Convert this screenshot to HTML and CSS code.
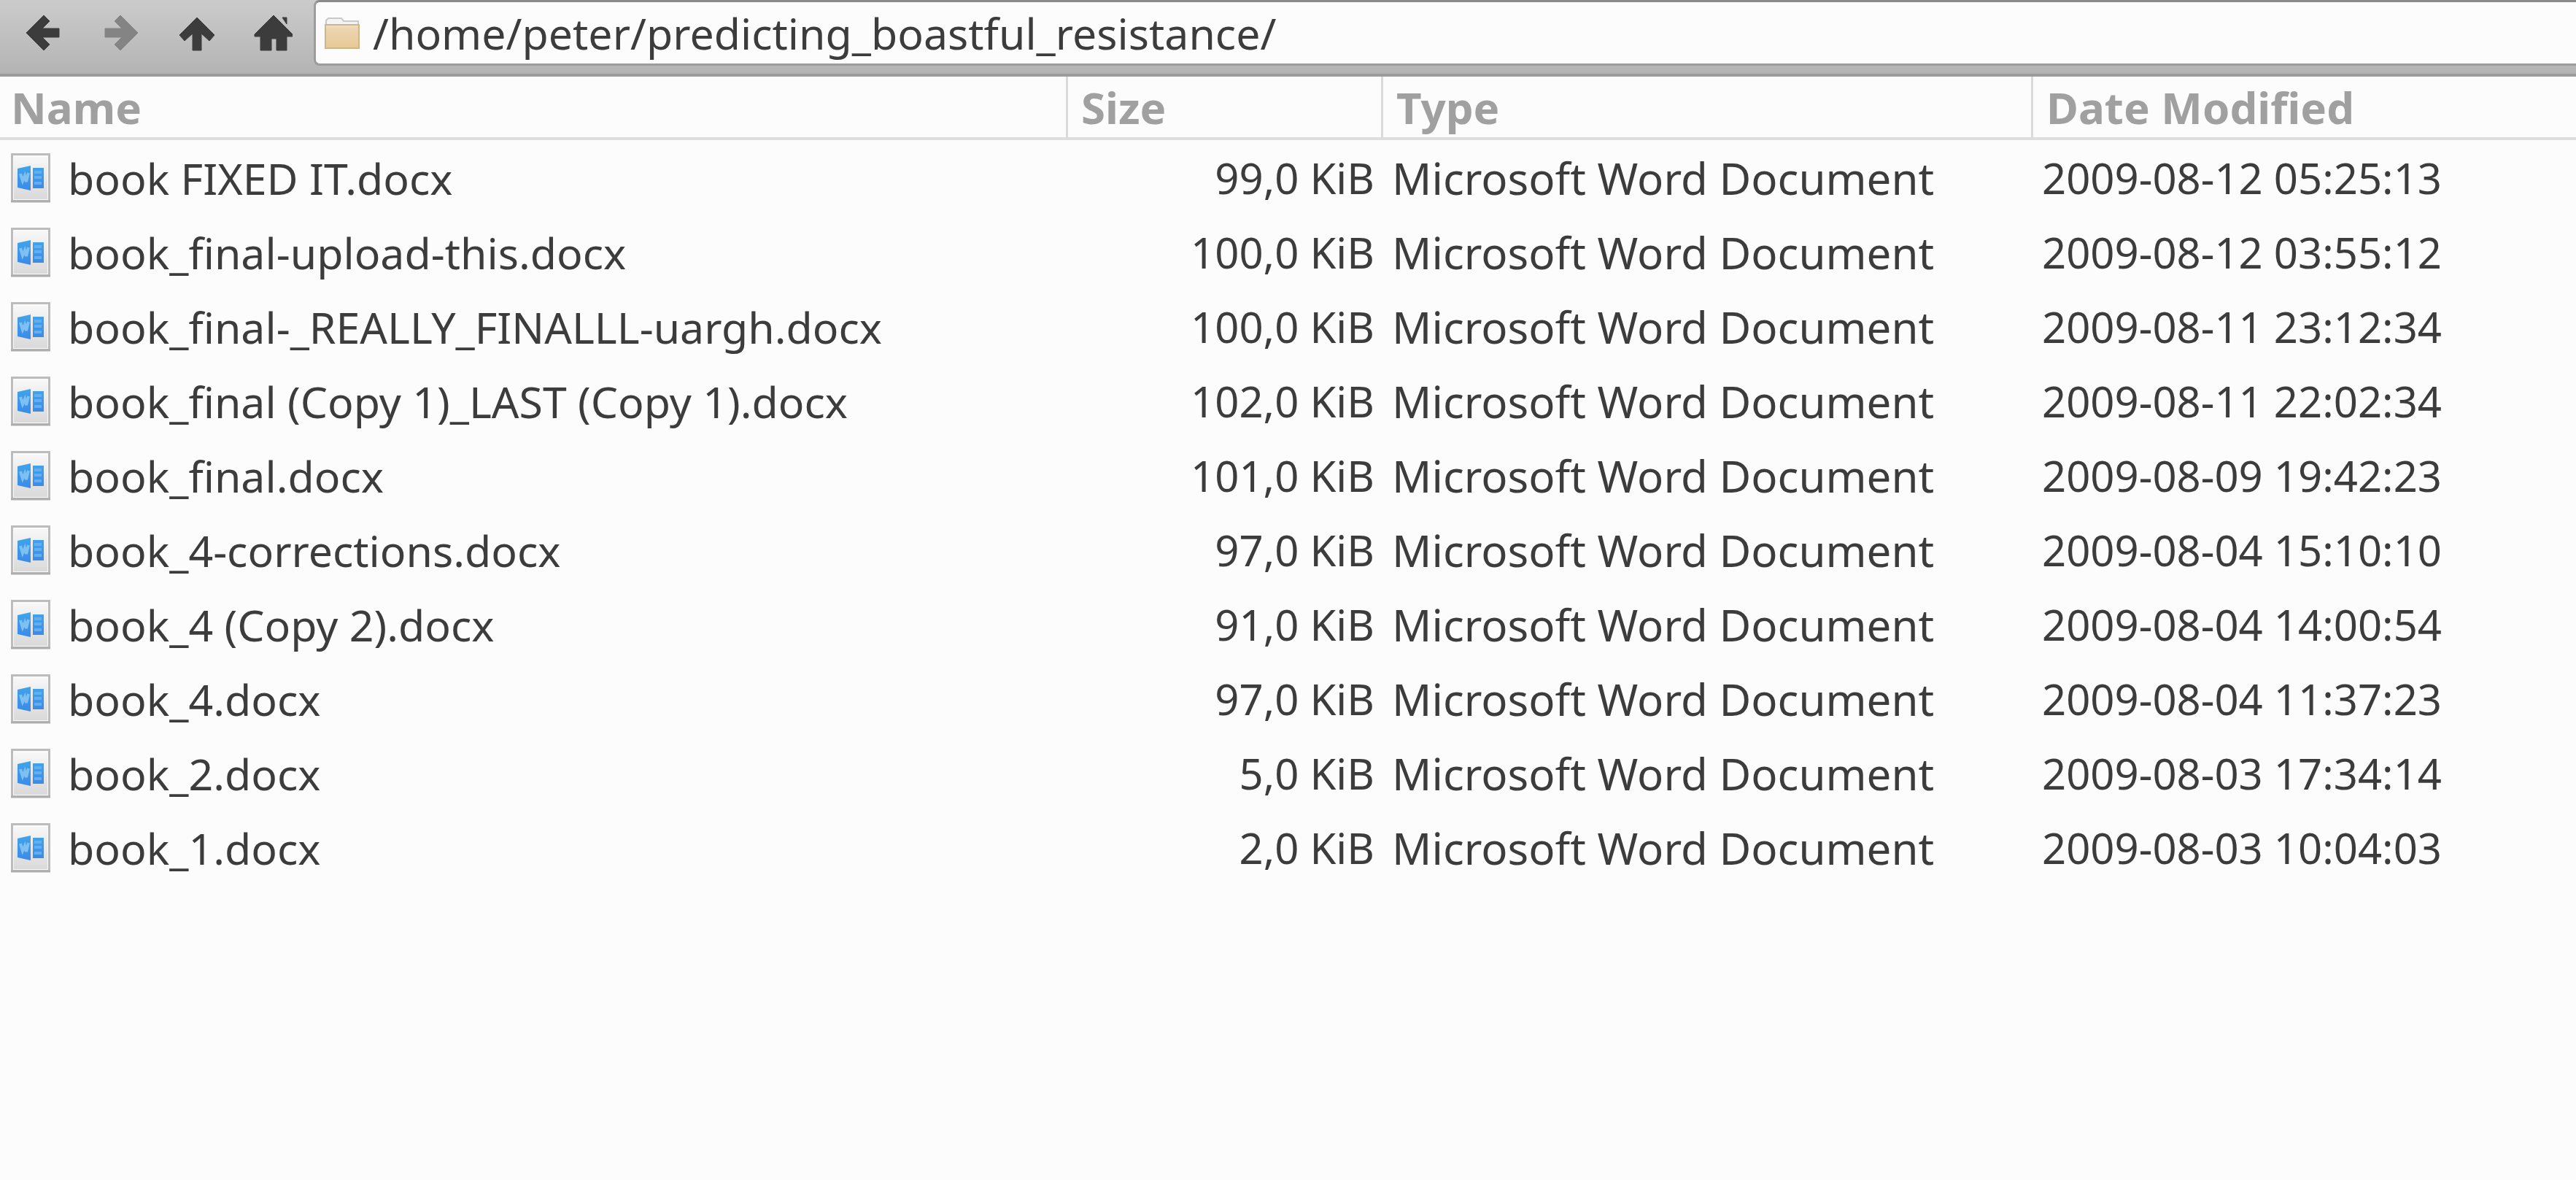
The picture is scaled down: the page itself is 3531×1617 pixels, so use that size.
FILE: index.html
```html
<!DOCTYPE html>
<html lang="en">
<head>
<meta charset="utf-8">
<title>predicting_boastful_resistance - File Manager</title>
<link rel="stylesheet" href="styles.css">
</head>
<body>
<svg class="defs" aria-hidden="true">
  <defs>
    <linearGradient id="paper" x1="0" y1="0" x2="0" y2="1">
      <stop offset="0" stop-color="#f7f7f7"/>
      <stop offset="1" stop-color="#d9d9d9"/>
    </linearGradient>
    <linearGradient id="blue" x1="0" y1="0" x2="0" y2="1">
      <stop offset="0" stop-color="#40a4ea"/>
      <stop offset="1" stop-color="#3b8ae8"/>
    </linearGradient>
    <linearGradient id="tan" x1="0" y1="0" x2="0" y2="1">
      <stop offset="0" stop-color="#f2dfc2"/>
      <stop offset="0.2" stop-color="#ecd4ae"/>
      <stop offset="1" stop-color="#e7c996"/>
    </linearGradient>
    <symbol id="docx" viewBox="0 0 54 68">
      <rect x="1.5" y="1.5" width="51" height="64" fill="#fafafa" stroke="#bcbcbc" stroke-width="3"/>
      <rect x="4" y="5" width="46" height="58" fill="url(#paper)"/>
      <path d="M0 66h54" stroke="#adadad" stroke-width="3"/>
      <path d="M9 21l18-4v34l-18-4z" fill="url(#blue)"/>
      <path d="M13 28l3 10 3-7 2 8 3-12" fill="none" stroke="#7fc0f2" stroke-width="4"/>
      <rect x="30" y="20" width="15" height="28" fill="url(#blue)"/>
      <path d="M32 26h10M32 33h10M32 41h10" stroke="#62aeee" stroke-width="4"/>
    </symbol>
  </defs>
</svg>
<header class="toolbar">
  <nav class="nav">
    <button class="nav-button" type="button" aria-label="Back">
      <svg viewBox="0 0 54 54"><path d="M4 27L28 3l8 8-10 10h23v12H26l10 10-8 8z"/></svg>
    </button>
    <button class="nav-button" type="button" aria-label="Forward" disabled>
      <svg viewBox="0 0 54 54"><path d="M52 27L28 3l-8 8 10 10H7v12h23L20 43l8 8z"/></svg>
    </button>
    <button class="nav-button" type="button" aria-label="Up">
      <svg viewBox="0 0 54 54"><path d="M28 6L4 30l7 8 11-10v23h12V28l11 10 7-8z"/></svg>
    </button>
    <button class="nav-button" type="button" aria-label="Home">
      <svg viewBox="0 0 54 54"><path d="M28 3L2 29v3h8v19h15V35h7v16h14V32h8v-3zM40 6h6v9z"/></svg>
    </button>
  </nav>
  <label class="location">
    <svg class="folder" viewBox="0 0 48 44" aria-hidden="true">
      <path d="M2 12V5l3-3h18l3 4h20v6" fill="#f4f4f4" stroke="#c9c9c9" stroke-width="2"/>
      <rect x="1" y="11" width="46" height="32" fill="url(#tan)" stroke="#cdb58c" stroke-width="2"/>
    </svg>
    <input class="path" type="text" aria-label="Location" value="/home/peter/predicting_boastful_resistance/" spellcheck="false">
  </label>
</header>
<main>
<table class="files">
  <colgroup><col class="col-name"><col class="col-size"><col class="col-type"><col></colgroup>
  <thead>
    <tr><th scope="col">Name</th><th scope="col">Size</th><th scope="col">Type</th><th scope="col">Date Modified</th></tr>
  </thead>
  <tbody>
    <tr><td><span class="file"><svg class="doc" aria-hidden="true"><use href="#docx"/></svg>book FIXED IT.docx</span></td><td class="size">99,0 KiB</td><td class="type">Microsoft Word Document</td><td>2009-08-12 05:25:13</td></tr>
    <tr><td><span class="file"><svg class="doc" aria-hidden="true"><use href="#docx"/></svg>book_final-upload-this.docx</span></td><td class="size">100,0 KiB</td><td class="type">Microsoft Word Document</td><td>2009-08-12 03:55:12</td></tr>
    <tr><td><span class="file"><svg class="doc" aria-hidden="true"><use href="#docx"/></svg>book_final-_REALLY_FINALLL-uargh.docx</span></td><td class="size">100,0 KiB</td><td class="type">Microsoft Word Document</td><td>2009-08-11 23:12:34</td></tr>
    <tr><td><span class="file"><svg class="doc" aria-hidden="true"><use href="#docx"/></svg>book_final (Copy 1)_LAST (Copy 1).docx</span></td><td class="size">102,0 KiB</td><td class="type">Microsoft Word Document</td><td>2009-08-11 22:02:34</td></tr>
    <tr><td><span class="file"><svg class="doc" aria-hidden="true"><use href="#docx"/></svg>book_final.docx</span></td><td class="size">101,0 KiB</td><td class="type">Microsoft Word Document</td><td>2009-08-09 19:42:23</td></tr>
    <tr><td><span class="file"><svg class="doc" aria-hidden="true"><use href="#docx"/></svg>book_4-corrections.docx</span></td><td class="size">97,0 KiB</td><td class="type">Microsoft Word Document</td><td>2009-08-04 15:10:10</td></tr>
    <tr><td><span class="file"><svg class="doc" aria-hidden="true"><use href="#docx"/></svg>book_4 (Copy 2).docx</span></td><td class="size">91,0 KiB</td><td class="type">Microsoft Word Document</td><td>2009-08-04 14:00:54</td></tr>
    <tr><td><span class="file"><svg class="doc" aria-hidden="true"><use href="#docx"/></svg>book_4.docx</span></td><td class="size">97,0 KiB</td><td class="type">Microsoft Word Document</td><td>2009-08-04 11:37:23</td></tr>
    <tr><td><span class="file"><svg class="doc" aria-hidden="true"><use href="#docx"/></svg>book_2.docx</span></td><td class="size">5,0 KiB</td><td class="type">Microsoft Word Document</td><td>2009-08-03 17:34:14</td></tr>
    <tr><td><span class="file"><svg class="doc" aria-hidden="true"><use href="#docx"/></svg>book_1.docx</span></td><td class="size">2,0 KiB</td><td class="type">Microsoft Word Document</td><td>2009-08-03 10:04:03</td></tr>
  </tbody>
</table>
</main>
</body>
</html>
```

FILE: styles.css
```css
* {
  box-sizing: border-box;
}

body {
  margin: 0;
  background: #fcfcfc;
  color: #3c3c3c;
  font-family: "Noto Sans", sans-serif;
  font-size: 58px;
  line-height: 80px;
}

.defs {
  position: absolute;
  width: 0;
  height: 0;
}

.toolbar {
  display: flex;
  align-items: flex-start;
  height: 105px;
  background: linear-gradient(#cbcbcb, #b4b4b4);
  border-bottom: 4px solid #9c9c9c;
}

.nav {
  display: flex;
  gap: 51px;
  padding: 18px 29px 0 32px;
}

.nav-button {
  width: 54px;
  height: 54px;
  padding: 0;
  border: 0;
  background: none;
  color: #3c3c3c;
}

.nav-button:disabled {
  color: #848484;
}

.nav-button svg {
  display: block;
  width: 54px;
  height: 54px;
  fill: currentColor;
  stroke: currentColor;
  stroke-width: 1px;
  stroke-linejoin: round;
}

.location {
  display: flex;
  flex: 1;
  align-items: center;
  gap: 18px;
  height: 90px;
  padding-left: 12px;
  background: #fcfcfc;
  border: 3px solid #9c9c9c;
  border-top-color: #8a8a8a;
  border-right: 0;
  border-radius: 8px 0 0 8px;
}

.folder {
  flex: none;
  width: 48px;
  height: 44px;
}

.path {
  flex: 1;
  min-width: 0;
  height: 80px;
  padding: 0;
  border: 0;
  outline: 0;
  background: none;
  color: inherit;
  font: inherit;
  font-size: 59px;
}

.files {
  width: 100%;
  table-layout: fixed;
  border-collapse: separate;
  border-spacing: 0;
}

.col-name {
  width: 1464px;
}

.col-size {
  width: 432px;
}

.col-type {
  width: 891px;
}

th {
  height: 87px;
  padding: 0 0 0 18px;
  border-right: 3px solid #dadada;
  border-bottom: 4px solid #dedede;
  color: #a0a0a0;
  font-size: 60px;
  font-weight: 700;
  text-align: left;
}

th:first-child {
  padding-left: 15px;
}

th:last-child {
  border-right: 0;
}

td {
  height: 102px;
  padding: 2px 12px 0;
  white-space: nowrap;
}

td:first-child {
  padding-left: 15px;
}

.size {
  text-align: right;
}

.type {
  font-size: 60px;
}

.file {
  display: flex;
  align-items: center;
  gap: 24px;
  font-size: 59px;
}

.doc {
  flex: none;
  width: 54px;
  height: 68px;
}
```
